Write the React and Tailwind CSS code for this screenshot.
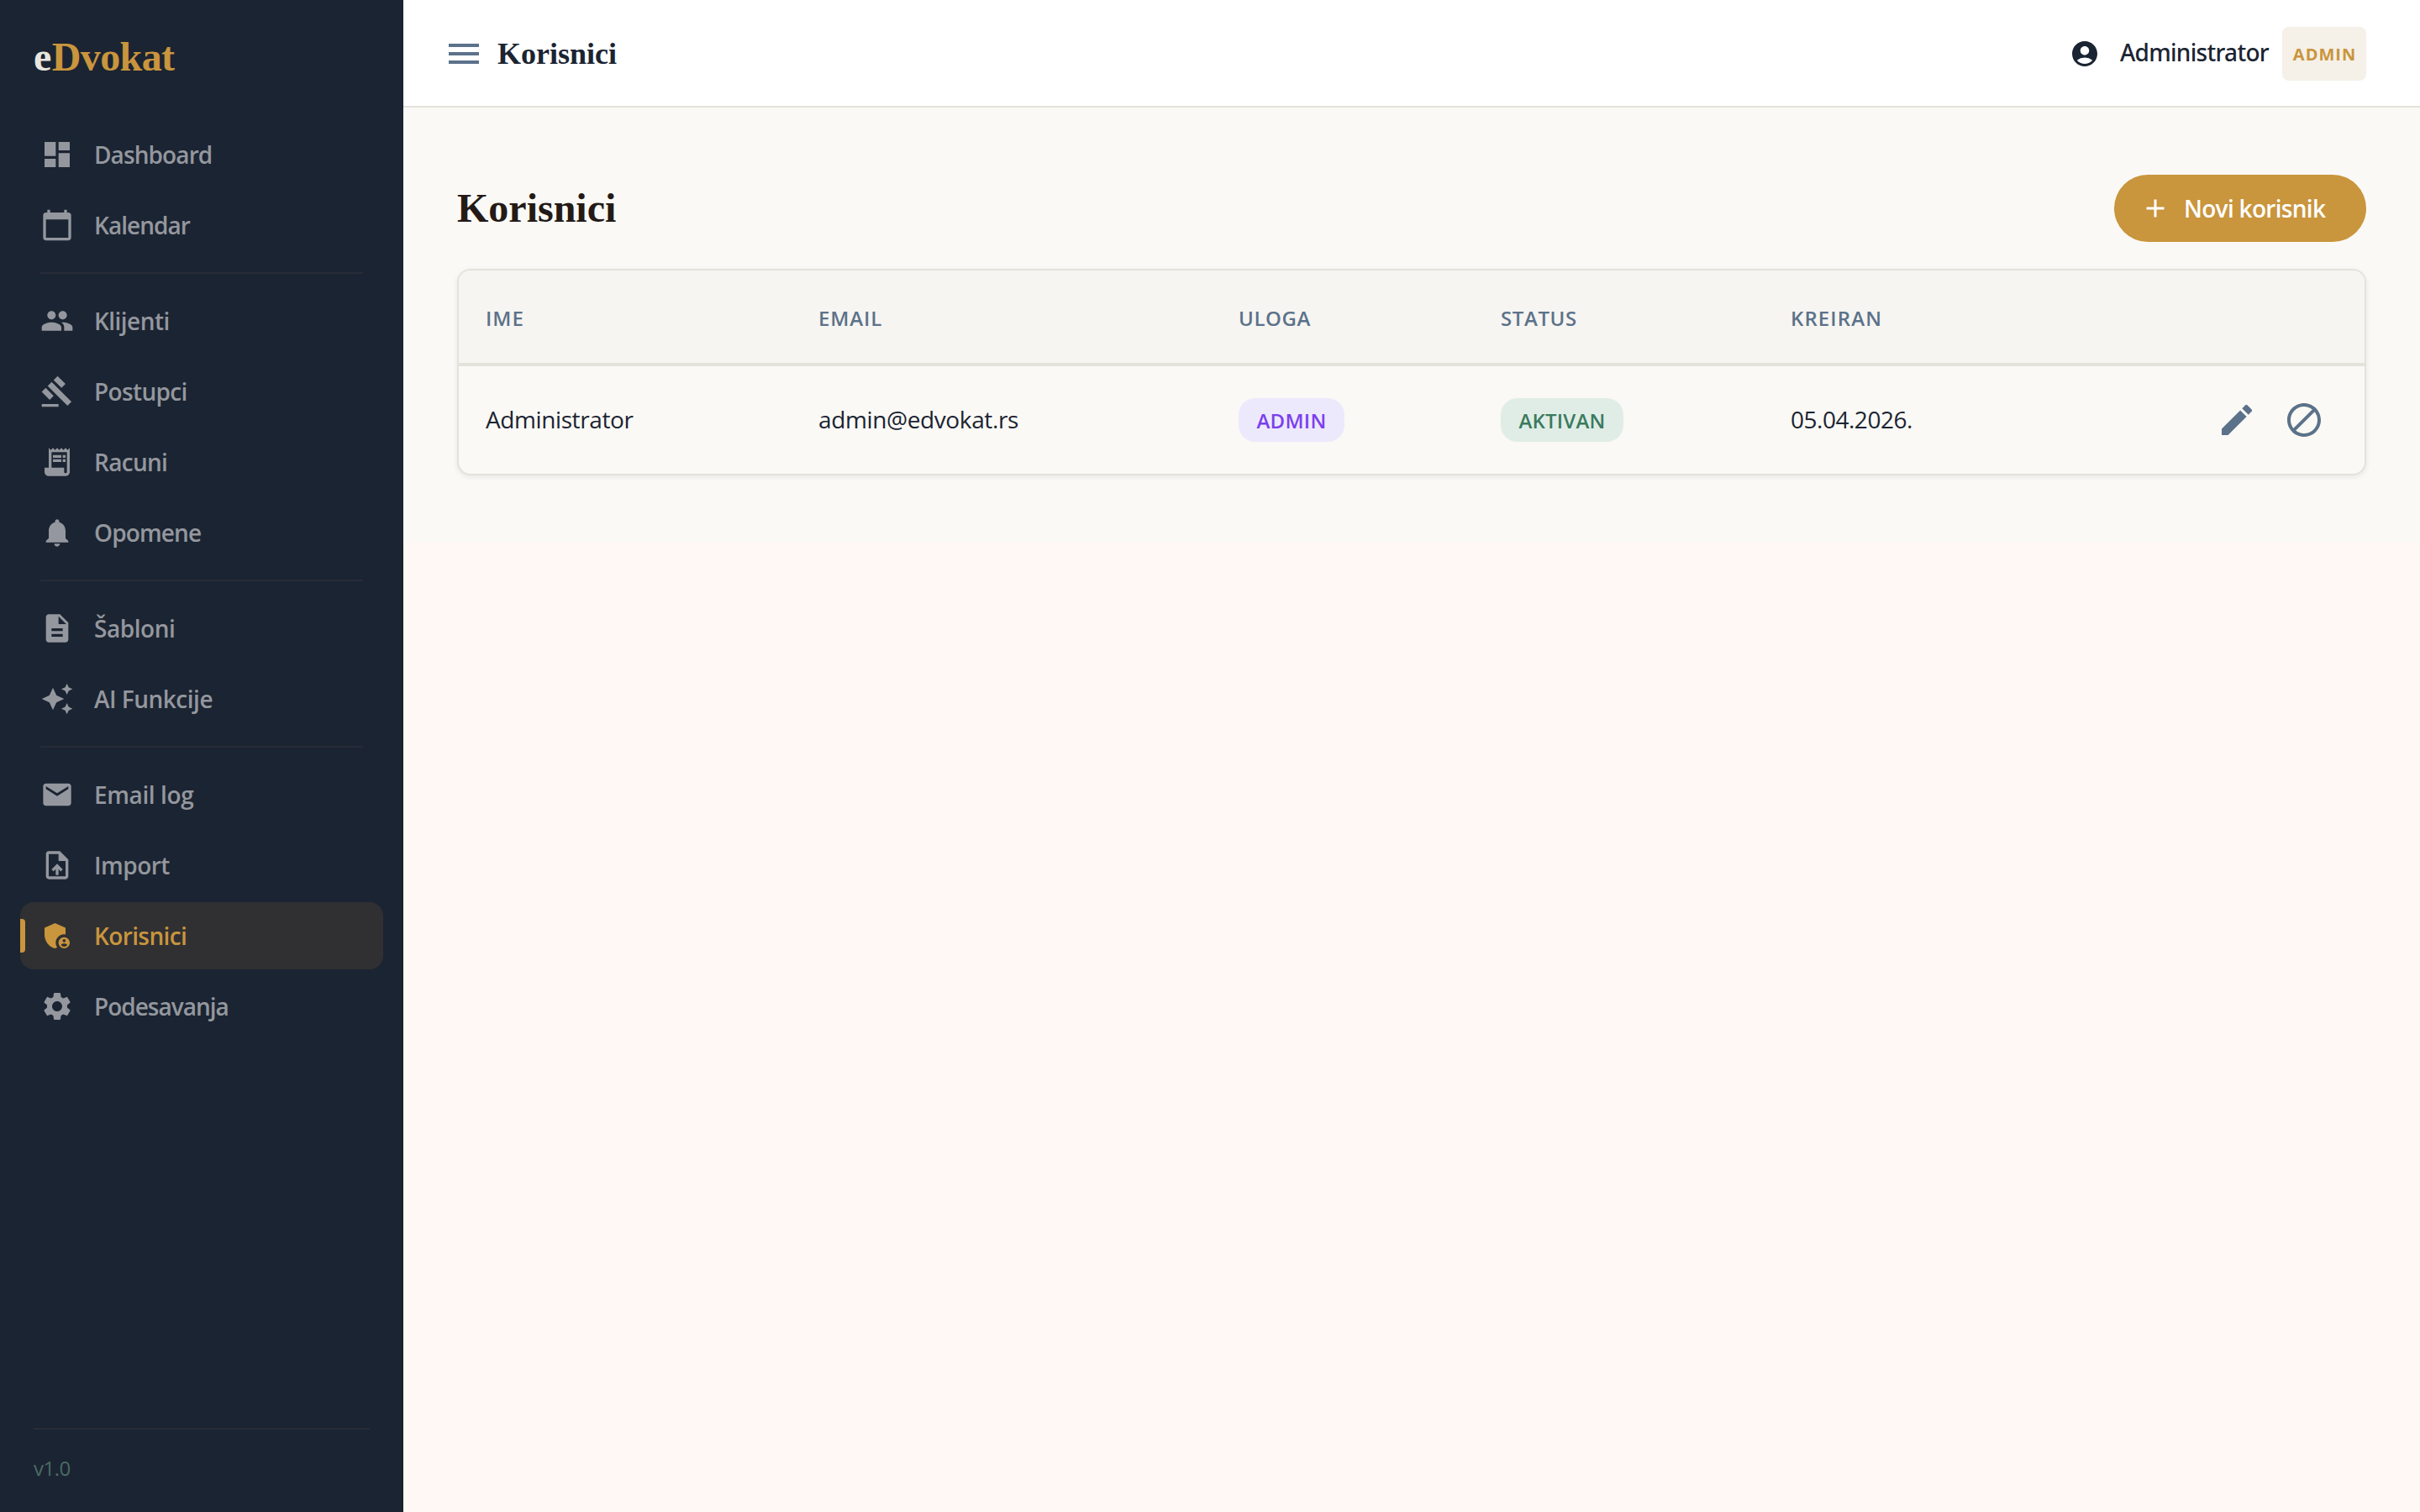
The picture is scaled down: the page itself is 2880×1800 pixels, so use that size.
import {
    MdAccountCircle,
    MdAdd,
    MdAdminPanelSettings,
    MdAutoAwesome,
    MdBlock,
    MdCalendarToday,
    MdDashboard,
    MdDescription,
    MdEdit,
    MdEmail,
    MdGavel,
    MdMenu,
    MdNotifications,
    MdPeople,
    MdReceiptLong,
    MdSettings,
    MdUploadFile,
} from "react-icons/md";

// Sidebar groups, separated by thin dividers
const navGroups = [
    [
        { label: "Dashboard", icon: MdDashboard, tracking: "tracking-[-0.9px]" },
        { label: "Kalendar", icon: MdCalendarToday, tracking: "tracking-[-0.95px]" },
    ],
    [
        { label: "Klijenti", icon: MdPeople, tracking: "tracking-[-0.55px]" },
        { label: "Postupci", icon: MdGavel, tracking: "tracking-[-0.65px]" },
        { label: "Racuni", icon: MdReceiptLong, tracking: "tracking-[-0.7px]" },
        { label: "Opomene", icon: MdNotifications, tracking: "tracking-[-0.87px]" },
    ],
    [
        { label: "Šabloni", icon: MdDescription, tracking: "tracking-[-0.45px]" },
        { label: "AI Funkcije", icon: MdAutoAwesome, tracking: "tracking-[-0.5px]" },
    ],
    [
        { label: "Email log", icon: MdEmail, tracking: "tracking-[-0.4px]" },
        { label: "Import", icon: MdUploadFile, tracking: "tracking-[-0.5px]" },
        { label: "Korisnici", icon: MdAdminPanelSettings, tracking: "tracking-[-0.62px]", active: true },
        { label: "Podesavanja", icon: MdSettings, tracking: "tracking-[-1px]" },
    ],
];

const users = [
    {
        name: "Administrator",
        email: "admin@edvokat.rs",
        role: "ADMIN",
        status: "AKTIVAN",
        created: "05.04.2026.",
    },
];

function NavItem({ item }) {
    const Icon = item.icon;
    return (
        <a
            className={`relative flex h-20 items-center gap-6 overflow-hidden rounded-2xl px-6 ${
                item.active ? "bg-[#303033] text-[#c9953d]" : "text-[#94979e]"
            }`}
        >
            {item.active && (
                <span className="absolute left-0 top-5 h-10 w-1.5 rounded-r bg-[#c9953d]" />
            )}
            <Icon className="size-10 shrink-0" />
            <span className={`text-[28px] font-semibold ${item.tracking}`}>{item.label}</span>
        </a>
    );
}

function Sidebar() {
    return (
        <aside className="flex w-[480px] shrink-0 flex-col bg-[#1b2432] px-6">
            <div className="px-4 pt-10 font-['Liberation_Serif',serif] text-5xl font-bold leading-[56px] tracking-[-0.6px] text-[#c9953d]">
                <span className="mr-px text-[#e8e6df]">e</span>Dvokat
            </div>
            <nav className="mt-12 flex flex-col">
                {navGroups.map((group, i) => (
                    <div key={i}>
                        {i > 0 && <div className="mx-6 my-4 h-0.5 bg-[#282c38]" />}
                        <div className="flex flex-col gap-1">
                            {group.map((item) => (
                                <NavItem key={item.label} item={item} />
                            ))}
                        </div>
                    </div>
                ))}
            </nav>
            <div className="mx-4 mt-auto h-[100px] border-t-2 border-[#282d37] pt-7 text-2xl leading-9 tracking-[-0.5px] text-[#4b6a66]">
                v1.0
            </div>
        </aside>
    );
}

function Topbar() {
    return (
        <header className="flex h-32 items-center border-b-2 border-[#e5e1dd] bg-white pl-12 pr-16 pt-0.5">
            <MdMenu className="size-12 text-[#5c718a]" />
            <h2 className="ml-4 font-['Liberation_Serif',serif] text-4xl font-bold text-[#1b2432]">
                Korisnici
            </h2>
            <div className="ml-auto flex items-center text-[#1b2432]">
                <MdAccountCircle className="size-9" />
                <span className="-mt-1 ml-6 font-['Noto_Sans',sans-serif] text-[28px] font-medium tracking-[-0.7px]">
                    Administrator
                </span>
                <span className="ml-4 flex h-16 w-[100px] items-center justify-center rounded-lg bg-[#f5f0e8] pl-px pt-0.5 text-xl font-bold tracking-[1px] text-[#c9953d]">
                    ADMIN
                </span>
            </div>
        </header>
    );
}

function UsersTable() {
    return (
        <div className="mt-8 overflow-hidden rounded-2xl border-2 border-[#e3e3db] bg-[#faf9f5] shadow-[0_2px_6px_rgba(28,25,23,0.08)]">
            <table className="w-full table-fixed text-left">
                <colgroup>
                    <col className="w-[396px]" />
                    <col className="w-[500px]" />
                    <col className="w-[312px]" />
                    <col className="w-[345px]" />
                    <col className="w-[340px]" />
                    <col />
                </colgroup>
                <thead>
                    <tr className="h-[112px] border-b-4 border-[#e3e3db] bg-[#f6f5f1] text-2xl text-[#5c728a] [&>th]:px-8 [&>th]:pt-1 [&>th]:font-semibold">
                        <th className="tracking-[1px]">IME</th>
                        <th className="tracking-[0.9px]">EMAIL</th>
                        <th className="tracking-[0.6px]">ULOGA</th>
                        <th className="tracking-[0.6px]">STATUS</th>
                        <th className="tracking-[1.1px]">KREIRAN</th>
                        <th />
                    </tr>
                </thead>
                <tbody>
                    {users.map((u) => (
                        <tr key={u.email} className="h-[130px] text-[28px] text-[#1b2432] [&>td]:px-8">
                            <td className="pb-0.5 tracking-[-0.4px]">{u.name}</td>
                            <td className="pb-0.5 tracking-[-0.38px]">{u.email}</td>
                            <td>
                                <span className="flex h-[52px] w-[126px] items-center justify-center rounded-[20px] bg-[#ede9fd] pt-0.5 text-2xl font-semibold tracking-[0.3px] text-[#7c3fed]">
                                    {u.role}
                                </span>
                            </td>
                            <td>
                                <span className="flex h-[52px] w-[146px] items-center justify-center rounded-[20px] bg-[#e0ede6] pt-0.5 text-2xl font-semibold tracking-[0.2px] text-[#3b7a5e]">
                                    {u.status}
                                </span>
                            </td>
                            <td className="pb-0.5 tracking-[-0.48px]">{u.created}</td>
                            <td>
                                <div className="flex justify-end text-[#5c728a]">
                                    <button className="flex size-20 items-center justify-center">
                                        <MdEdit className="size-12" />
                                    </button>
                                    <button className="flex size-20 items-center justify-center">
                                        <MdBlock className="size-12" />
                                    </button>
                                </div>
                            </td>
                        </tr>
                    ))}
                </tbody>
            </table>
        </div>
    );
}

export default function App() {
    return (
        <div className="flex h-screen w-full overflow-hidden bg-[#fff8f5] font-['Open_Sans',sans-serif]">
            <Sidebar />
            <div className="flex-1">
                <Topbar />
                <main className="bg-[#faf9f5] px-16 py-20">
                    <div className="flex h-20 items-center justify-between">
                        <h1 className="font-['Liberation_Serif',serif] text-5xl font-bold text-[#241a16]">
                            Korisnici
                        </h1>
                        <button className="flex h-20 w-[300px] items-center rounded-full bg-[#c9953d] pl-[31px] text-[28px] font-semibold tracking-[-0.7px] text-white">
                            <MdAdd className="size-9" />
                            <span className="ml-4">Novi korisnik</span>
                        </button>
                    </div>
                    <UsersTable />
                </main>
            </div>
        </div>
    );
}
